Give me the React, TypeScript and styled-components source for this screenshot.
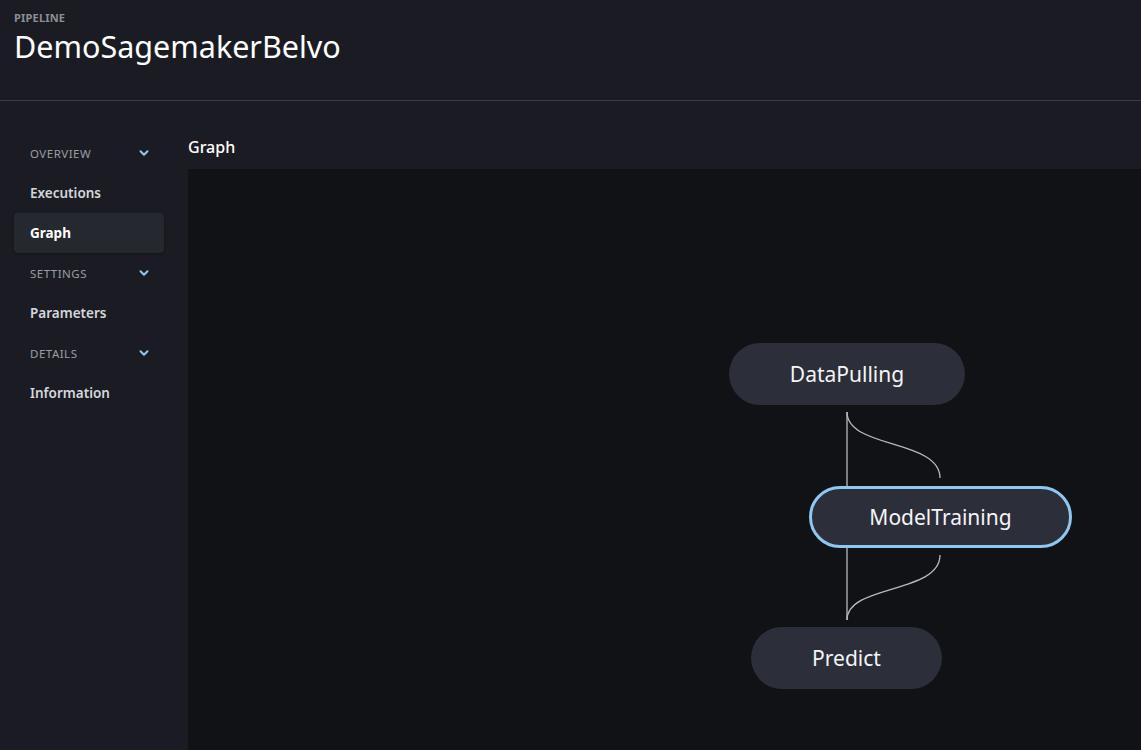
import styled, { createGlobalStyle } from 'styled-components'

const GlobalStyle = createGlobalStyle`
  html, body {
    margin: 0;
    padding: 0;
    background: #1b1c23;
    font-family: 'Noto Sans', 'Open Sans', sans-serif;
    color: #f2f3f5;
  }
  #root { height: 750px; }
`

const Page = styled.div`
  width: 1141px;
  height: 750px;
  display: flex;
  flex-direction: column;
  background: #1b1c23;
  overflow: hidden;
`

const Header = styled.header`
  height: 101px;
  flex-shrink: 0;
  box-sizing: border-box;
  border-bottom: 1px solid #3b3c44;
  padding: 10px 14px 0;
  background: #1b1c23;
`

const Eyebrow = styled.div`
  font-size: 11px;
  font-weight: 700;
  color: #8d8e96;
  letter-spacing: 0.2px;
  line-height: 16px;
`

const Title = styled.h1`
  margin: 0;
  font-size: 30.5px;
  font-weight: 400;
  line-height: 41px;
  color: #ffffff;
`

const Body = styled.div`
  flex: 1;
  display: flex;
  min-height: 0;
`

const Sidebar = styled.nav`
  width: 188px;
  flex-shrink: 0;
  box-sizing: border-box;
  padding: 32px 24px 0 14px;
  display: flex;
  flex-direction: column;
`

const Section = styled.div`
  height: 40px;
  display: flex;
  align-items: center;
  justify-content: space-between;
  padding: 0 14px 0 16px;
  font-size: 11.5px;
  letter-spacing: 0.5px;
  color: #9a9ca6;
`

const NavItem = styled.div<{ $active?: boolean }>`
  height: 40px;
  display: flex;
  align-items: center;
  padding-left: 16px;
  border-radius: 4px;
  font-size: 13.5px;
  font-weight: ${(p) => (p.$active ? 700 : 600)};
  color: ${(p) => (p.$active ? '#ffffff' : '#d5d6dc')};
  background: ${(p) => (p.$active ? '#262830' : 'transparent')};
  box-shadow: ${(p) => (p.$active ? '0 1px 2px rgba(0,0,0,0.35)' : 'none')};
`

const Main = styled.main`
  flex: 1;
  display: flex;
  flex-direction: column;
  min-width: 0;
`

const MainTitle = styled.h2`
  margin: 0;
  height: 68px;
  flex-shrink: 0;
  box-sizing: border-box;
  padding-top: 35px;
  font-size: 16px;
  font-weight: 500;
  line-height: 22px;
  color: #ffffff;
`

const Canvas = styled.div`
  flex: 1;
  position: relative;
  background: #111216;
  overflow: hidden;
`

const Edges = styled.svg`
  position: absolute;
  left: 0;
  top: 0;
  width: 100%;
  height: 100%;
`

const Node = styled.div<{ $selected?: boolean }>`
  position: absolute;
  box-sizing: border-box;
  height: 62px;
  border-radius: 31px;
  background: #2c2e39;
  border: ${(p) => (p.$selected ? '3px solid #8ec8f2' : 'none')};
  display: flex;
  align-items: center;
  justify-content: center;
  font-size: 21px;
  color: #f4f5f7;
`

const Chevron = () => (
  <svg width="12" height="12" viewBox="0 0 12 12" fill="none">
    <path d="M2.5 4.2 6 7.7 9.5 4.2" stroke="#8ec8f2" strokeWidth="2" strokeLinecap="round" strokeLinejoin="round" />
  </svg>
)

const nodes = [
  { name: 'DataPulling', x: 541, y: 174, w: 236 },
  { name: 'ModelTraining', x: 621, y: 317, w: 263, selected: true },
  { name: 'Predict', x: 563, y: 458, w: 191 },
]

export default function App() {
  return (
    <Page>
      <GlobalStyle />
      <Header>
        <Eyebrow>PIPELINE</Eyebrow>
        <Title>DemoSagemakerBelvo</Title>
      </Header>
      <Body>
        <Sidebar>
          <Section>
            OVERVIEW
            <Chevron />
          </Section>
          <NavItem>Executions</NavItem>
          <NavItem $active>Graph</NavItem>
          <Section>
            SETTINGS
            <Chevron />
          </Section>
          <NavItem>Parameters</NavItem>
          <Section>
            DETAILS
            <Chevron />
          </Section>
          <NavItem>Information</NavItem>
        </Sidebar>
        <Main>
          <MainTitle>Graph</MainTitle>
          <Canvas>
            <Edges>
              <g stroke="#b9bac0" strokeWidth="1.3" fill="none">
                <path d="M659 243 V451" />
                <path d="M659 243 C659 280 752 270 752 309" />
                <path d="M752 386 C752 425 659 415 659 451" />
              </g>
            </Edges>
            {nodes.map((n) => (
              <Node key={n.name} $selected={n.selected} style={{ left: n.x, top: n.y, width: n.w }}>
                {n.name}
              </Node>
            ))}
          </Canvas>
        </Main>
      </Body>
    </Page>
  )
}
